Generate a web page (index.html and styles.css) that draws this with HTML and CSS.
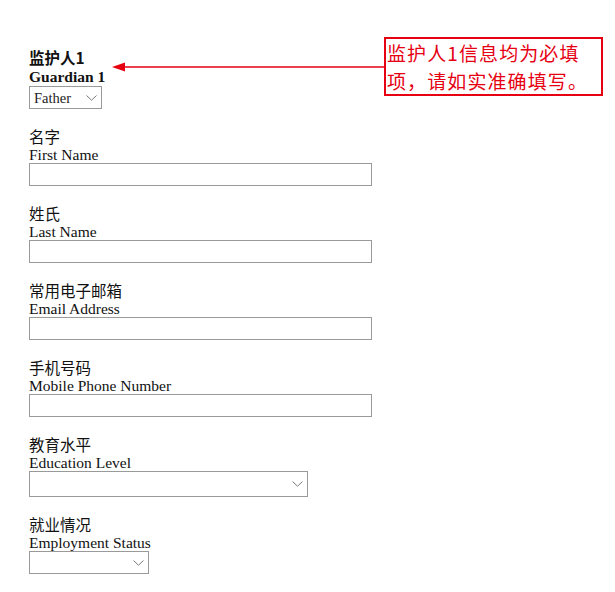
FILE: index.html
```html
<!DOCTYPE html>
<html>
    <head>
        <meta charset="utf-8">
        <title>监护人信息</title>
        <link rel="stylesheet" href="styles.css">
    </head>
    <body>
        <form id="guardian">
            <div class="field head">
                <span class="cn">监护人1</span>
                <span class="en">Guardian 1</span>
                <span class="pick relation">
                    <select name="relation">
                        <option>Father</option>
                        <option>Mother</option>
                    </select>
                    <svg class="chev" width="11" height="6" viewBox="0 0 11 6"><path d="M0.5 0.5 L5.5 5.2 L10.5 0.5"/></svg>
                </span>
            </div>

            <div class="field">
                <span class="cn">名字</span>
                <span class="en">First Name</span>
                <input type="text" name="first" class="text">
            </div>

            <div class="field">
                <span class="cn">姓氏</span>
                <span class="en">Last Name</span>
                <input type="text" name="last" class="text">
            </div>

            <div class="field">
                <span class="cn">常用电子邮箱</span>
                <span class="en">Email Address</span>
                <input type="text" name="email" class="text">
            </div>

            <div class="field">
                <span class="cn">手机号码</span>
                <span class="en">Mobile Phone Number</span>
                <input type="text" name="mobile" class="text">
            </div>

            <div class="field">
                <span class="cn">教育水平</span>
                <span class="en">Education Level</span>
                <span class="pick education">
                    <select name="education">
                        <option></option>
                    </select>
                    <svg class="chev" width="11" height="6" viewBox="0 0 11 6"><path d="M0.5 0.5 L5.5 5.2 L10.5 0.5"/></svg>
                </span>
            </div>

            <div class="field">
                <span class="cn">就业情况</span>
                <span class="en">Employment Status</span>
                <span class="pick employment">
                    <select name="employment">
                        <option></option>
                    </select>
                    <svg class="chev" width="11" height="6" viewBox="0 0 11 6"><path d="M0.5 0.5 L5.5 5.2 L10.5 0.5"/></svg>
                </span>
            </div>
        </form>

        <div class="note">
            <div>监护人1信息均为必填</div>
            <div>项，请如实准确填写。</div>
        </div>
        <svg class="arrow" width="274" height="12" viewBox="0 0 274 12">
            <line x1="10" y1="6" x2="274" y2="6"/>
            <polygon points="0,6 13,1.5 13,10.5"/>
        </svg>
    </body>
</html>
```

FILE: styles.css
```css
body {
    margin: 0;
    color: #111;
    background: #fff;
    font-family: "Liberation Serif", "Noto Sans CJK SC", serif;
    font-size: 15.5px;
}

#guardian {
    padding: 47px 0 0 29px;
}

.field {
    margin-bottom: 17px;
}

.cn {
    display: block;
    padding-top: 1px;
    font-family: "Noto Sans CJK SC", sans-serif;
    font-size: 15.5px;
    line-height: 19px;
}

.en {
    display: block;
    line-height: 17px;
}

.head .cn {
    padding-top: 0;
    font-weight: bold;
    line-height: 20px;
}

.head .en {
    font-weight: bold;
    line-height: 19px;
}

.text {
    display: block;
    box-sizing: border-box;
    width: 343px;
    height: 23px;
    margin: 0;
    padding: 1px 3px;
    border: 1px solid #9a9a9a;
    background: #fff;
    font: 14px "Liberation Serif", serif;
}

.pick {
    position: relative;
    display: block;
}

.pick select {
    display: block;
    box-sizing: border-box;
    width: 100%;
    height: 100%;
    margin: 0;
    padding: 0 4px;
    border: 1px solid #9a9a9a;
    border-radius: 0;
    background: #fff;
    color: #222;
    font: 14.5px "Liberation Serif", serif;
    appearance: none;
    -webkit-appearance: none;
}

.chev {
    position: absolute;
    right: 5px;
    top: 50%;
    margin-top: -3px;
    pointer-events: none;
}

.chev path {
    fill: none;
    stroke: #7a7a7a;
    stroke-width: 1;
}

.relation {
    width: 73px;
    height: 23px;
}

.education {
    width: 279px;
    height: 26px;
}

.employment {
    width: 120px;
    height: 23px;
}

/* annotation laid over the form */
.note {
    position: absolute;
    left: 384px;
    top: 37px;
    box-sizing: border-box;
    width: 219px;
    height: 59px;
    padding: 0 0 0 1px;
    border: 2px solid #e60012;
    color: #e60012;
    font-family: "Noto Sans CJK SC", sans-serif;
    font-size: 19px;
    letter-spacing: 1.1px;
    line-height: 27.5px;
    white-space: nowrap;
}

.arrow {
    position: absolute;
    left: 112px;
    top: 61px;
}

.arrow line {
    stroke: #e60012;
    stroke-width: 1.6;
}

.arrow polygon {
    fill: #e60012;
}
```
